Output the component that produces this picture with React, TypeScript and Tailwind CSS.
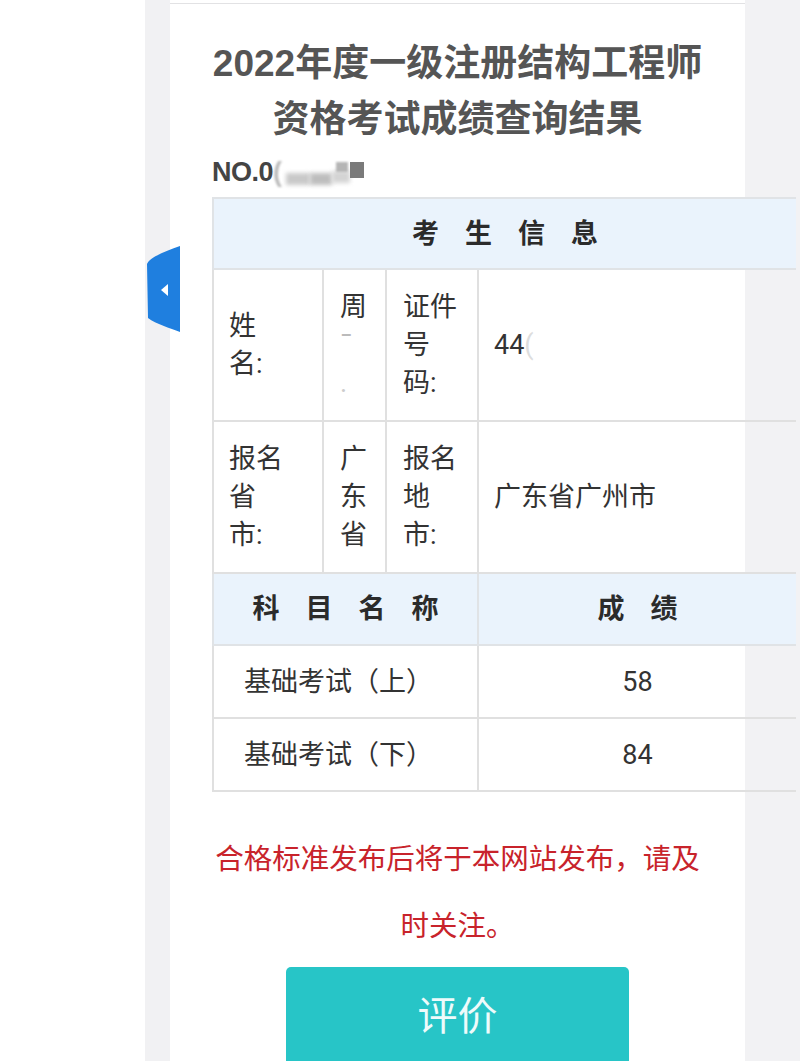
import React from "react";

const cjk = { fontFamily: 'Roboto, "Noto Sans CJK SC", sans-serif' };

function Spaced({ text, className }: { text: string; className?: string }) {
  return (
    <div className={"flex items-center justify-center gap-[26px] " + (className ?? "")}>
      {text.split("").map((c, i) => (
        <span key={i}>{c}</span>
      ))}
    </div>
  );
}

export default function App() {
  return (
    <div
      className="relative flex min-h-[1061px] w-[800px] overflow-hidden bg-[#f2f2f4]"
      style={cjk}
    >
      <div className="w-[145px] shrink-0 bg-white" />
      <div className="w-[25px] shrink-0 bg-[#f1f1f3]" />
      <div className="w-[575px] shrink-0 bg-white">
        <div className="h-[4px] border-b border-[#e2e2e4]" />
        <div className="px-[42px] pt-[32px]">
          <h1
            className="text-center text-[37px] leading-[56px] font-bold text-[#555555]"
            style={{ fontFamily: '"Liberation Sans", "Noto Sans CJK SC", sans-serif' }}
          >
            2022年度一级注册结构工程师
            <br />
            资格考试成绩查询结果
          </h1>

          <div className="mt-[6px] flex h-[36px] items-center">
            <span
              className="text-[27px] font-bold tracking-[-0.5px] text-[#444444]"
              style={{ fontFamily: '"Liberation Sans", sans-serif' }}
            >
              NO.0
            </span>
            <span className="text-[27px] font-bold text-[#bbbbbb] blur-[1px]" style={{ fontFamily: '"Liberation Sans", sans-serif' }}>(</span>
            <div className="relative ml-[2px] h-[26px] w-[80px]">
              <div className="absolute left-[2px] top-[14px] h-[12px] w-[24px] bg-[#c9c9c9] blur-[2px]" />
              <div className="absolute left-[26px] top-[14px] h-[12px] w-[22px] bg-[#bdbdbd] blur-[2px]" />
              <div className="absolute left-[48px] top-[12px] h-[12px] w-[18px] bg-[#d4d4d4] blur-[2px]" />
              <div className="absolute left-[66px] top-[3px] h-[16px] w-[14px] bg-[#7a7a7a] blur-[0.5px]" />
              <div className="absolute left-[52px] top-[3px] h-[10px] w-[12px] bg-[#b5b5b5] blur-[1px]" />
            </div>
          </div>

          <table className="mt-[7px] w-[583px] max-w-none table-fixed border-collapse text-[27px] leading-[38px] text-[#333333]">
            <colgroup>
              <col className="w-[110px]" />
              <col className="w-[63px]" />
              <col className="w-[92px]" />
              <col className="w-[318px]" />
            </colgroup>
            <tbody>
              <tr className="h-[71px] bg-[#eaf3fc]">
                <td colSpan={4} className="border-2 border-r-0 border-[#e0e3e6] font-bold text-[#2b2b2b]">
                  <Spaced text="考生信息" />
                </td>
              </tr>
              <tr className="h-[152px]">
                <td className="border-2 border-[#e0e0e0] pl-[15px] align-middle">
                  姓<br />名:
                </td>
                <td className="border-2 border-[#e0e0e0] pl-[16px] align-middle">
                  周<br />
                  <span className="text-[#bbbbbb]">ˉ</span>
                  <br />
                  <span className="text-[#cccccc]">.</span>
                </td>
                <td className="border-2 border-[#e0e0e0] pl-[16px] align-middle">
                  证件<br />号<br />码:
                </td>
                <td className="border-2 border-r-0 border-[#e0e0e0] pl-[15px] align-middle">
                  44<span className="text-[#dddddd]">(</span>
                </td>
              </tr>
              <tr className="h-[152px]">
                <td className="border-2 border-[#e0e0e0] pl-[15px] align-middle">
                  报名<br />省<br />市:
                </td>
                <td className="border-2 border-[#e0e0e0] pl-[16px] align-middle">
                  广<br />东<br />省
                </td>
                <td className="border-2 border-[#e0e0e0] pl-[16px] align-middle">
                  报名<br />地<br />市:
                </td>
                <td className="border-2 border-r-0 border-[#e0e0e0] pl-[15px] align-middle">广东省广州市</td>
              </tr>
              <tr className="h-[72px] bg-[#eaf3fc] font-bold text-[#2b2b2b]">
                <td colSpan={3} className="border-2 border-[#e0e3e6]">
                  <Spaced text="科目名称" />
                </td>
                <td className="border-2 border-r-0 border-[#e0e3e6]">
                  <Spaced text="成绩" />
                </td>
              </tr>
              <tr className="h-[73px]">
                <td colSpan={3} className="border-2 border-[#e0e0e0] pr-[14px] text-center">
                  基础考试（上）
                </td>
                <td className="border-2 border-r-0 border-[#e0e0e0] text-center">58</td>
              </tr>
              <tr className="h-[73px]">
                <td colSpan={3} className="border-2 border-[#e0e0e0] pr-[14px] text-center">
                  基础考试（下）
                </td>
                <td className="border-2 border-r-0 border-[#e0e0e0] text-center">84</td>
              </tr>
            </tbody>
          </table>

          <p className="mt-[34px] text-center text-[28.5px] leading-[67px] text-[#c8232b]">
            合格标准发布后将于本网站发布，请及时关注。
          </p>

          <div className="mx-auto mt-[7px] flex h-[100px] w-[343px] items-center justify-center rounded-t-[5px] bg-[#27c5c7]">
            <span className="text-[40px] text-[#eefbfb]">评价</span>
          </div>
        </div>
      </div>
      <div className="flex-1" />

      <svg
        className="absolute left-[146px] top-[244px]"
        width="36"
        height="90"
        viewBox="146 244 36 90"
      >
        <path
          d="M180 246 L180 332 C170 328 156 324 148 318 L147 264 C150 257 166 251 180 246 Z"
          fill="#1f7fdf"
        />
        <path d="M161 290 L168 284 L168 296 Z" fill="#ffffff" />
      </svg>
    </div>
  );
}
